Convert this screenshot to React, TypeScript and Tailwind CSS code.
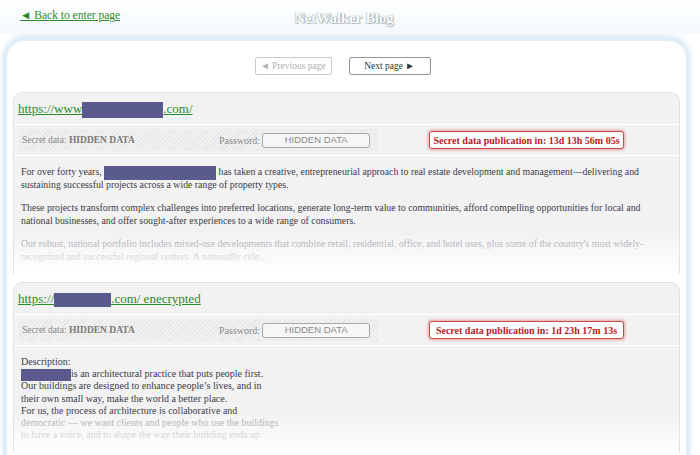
import React from "react";

const serif = "font-['Liberation_Serif','Times_New_Roman',serif]";

function Redact({ w, h, tight }: { w: number; h: number; tight?: boolean }) {
  return (
    <span
      className={tight ? "inline-block bg-[#5b5a8e] align-middle -my-[3px]" : "inline-block bg-[#5b5a8e] align-middle"}
      style={{ width: w, height: h }}
    />
  );
}

function SecretRow({ timer }: { timer: string }) {
  return (
    <div className="flex items-center h-[31px] pl-[5px] border-b border-white">
      <div className="flex items-center w-[359px] h-[22px] bg-[repeating-linear-gradient(135deg,#e6e6e6_0px,#e6e6e6_1px,#f1f1f1_1px,#f1f1f1_3px)]">
        <span className="ml-[3px] w-[197px] text-[9.5px] text-[#8a8a8a]">
          Secret data: <b className="text-[#7a7a7a]">HIDDEN DATA</b>
        </span>
        <span className="text-[10px] text-[#8a8a8a]">Password:</span>
        <span className="ml-[2px] w-[108px] h-[15px] flex items-center justify-center rounded-[3px] border border-[#a8a8a8] bg-[#f6f6f6] text-[9.5px] text-[#8a8a8a] font-['Liberation_Sans',Arial,sans-serif]">
          HIDDEN DATA
        </span>
      </div>
      <div className="ml-[51px] h-[18px] w-[195px] flex items-center justify-center rounded-[3px] border border-[#cc4b4b] bg-white shadow-[0_0_3px_1px_rgba(204,60,60,0.45)] text-[10px] font-bold text-[#c01818]">
        {timer}
      </div>
    </div>
  );
}

function Card({
  url,
  timer,
  children,
  bodyClass,
}: {
  url: React.ReactNode;
  timer: string;
  children: React.ReactNode;
  bodyClass: string;
}) {
  return (
    <div className="relative rounded-t-[9px] border border-[#e3e3e3] border-b-0 bg-[#f2f2f2]">
      <div className="flex items-center h-[32px] pl-[4px] border-b border-white">
        <a className="text-[13px] text-[#2b8a2b] underline decoration-[#2b8a2b] whitespace-nowrap">
          {url}
        </a>
      </div>
      <SecretRow timer={timer} />
      <div className={bodyClass}>{children}</div>
      <div className="absolute left-0 right-0 bottom-0 h-[42px] bg-gradient-to-b from-[rgba(255,255,255,0)] to-white" />
    </div>
  );
}

export default function App() {
  return (
    <div className={`min-h-[455px] bg-white overflow-hidden ${serif}`}>
      <div className="relative flex items-center h-[34px] bg-gradient-to-b from-white to-[#f3f9fc]">
        <a className="ml-[20px] mt-[-2px] text-[11.5px] text-[#2b8a2b] underline whitespace-nowrap">
          ◄ Back to enter page
        </a>
        <div className="absolute left-0 right-[12px] top-[8px] text-center text-[14.5px] font-bold text-white [text-shadow:0_0_1px_#8a9aa6,0_0_1px_#8a9aa6,1px_1px_1px_#b0bcc4]">
          NetWalker Blog
        </div>
      </div>
      <div className="ml-[3px] mr-[10px] mt-[3px] rounded-t-[22px] border-[4px] border-b-0 border-[#e1eef7] shadow-[0_-2px_5px_rgba(190,220,238,0.6)] bg-white min-h-[420px] pl-[6px] pr-[6px]">
        <div className="flex justify-center gap-[17px] pt-[16px] pr-[8px]">
          <button className="w-[77px] h-[18px] border border-[#c6cbd2] rounded-[2px] bg-white text-[9.5px] text-[#b0b0b0]">
            ◄ Previous page
          </button>
          <button className="w-[82px] h-[18px] border border-[#8f96a0] rounded-[2px] bg-white text-[9.5px] text-[#333]">
            Next page ►
          </button>
        </div>
        <div className="mt-[17px]">
          <Card
            url={
              <>
                https://www<Redact w={81} h={16} />.com/
              </>
            }
            timer="Secret data publication in: 13d 13h 56m 05s"
            bodyClass="pt-[9px] pb-[11px] pl-[7px] text-[9.82px] leading-[13px] text-[#3b3b4a] whitespace-nowrap"
          >
            <p>
              For over forty years, <Redact w={112} h={14} tight /> has taken a creative, entrepreneurial approach to real estate development and management—delivering and
              <br />
              sustaining successful projects across a wide range of property types.
            </p>
            <p className="mt-[10px]">
              These projects transform complex challenges into preferred locations, generate long-term value to communities, afford compelling opportunities for local and
              <br />
              national businesses, and offer sought-after experiences to a wide range of consumers.
            </p>
            <p className="mt-[10px] text-[#9a9aa4]">
              Our robust, national portfolio includes mixed-use developments that combine retail, residential, office, and hotel uses, plus some of the country's most widely-
              <br />
              recognized and successful regional centers. A nationally cele...
            </p>
          </Card>
          <div className="mt-[8px]">
            <Card
              url={
                <>
                  https://<Redact w={57} h={14} />.com/ enecrypted
                </>
              }
              timer="Secret data publication in: 1d 23h 17m 13s"
              bodyClass="pt-[10px] pb-[12px] pl-[7px] text-[10px] leading-[12.2px] text-[#3b3b4a] whitespace-nowrap"
            >
              <div>Description:</div>
              <div>
                <Redact w={50} h={12} tight />is an architectural practice that puts people first.
              </div>
              <div>Our buildings are designed to enhance people’s lives, and in</div>
              <div>their own small way, make the world a better place.</div>
              <div>For us, the process of architecture is collaborative and</div>
              <div className="text-[#9a9aa4]">democratic — we want clients and people who use the buildings</div>
              <div className="text-[#9a9aa4]">to have a voice, and to shape the way their building ends up.</div>
            </Card>
          </div>
        </div>
      </div>
    </div>
  );
}
